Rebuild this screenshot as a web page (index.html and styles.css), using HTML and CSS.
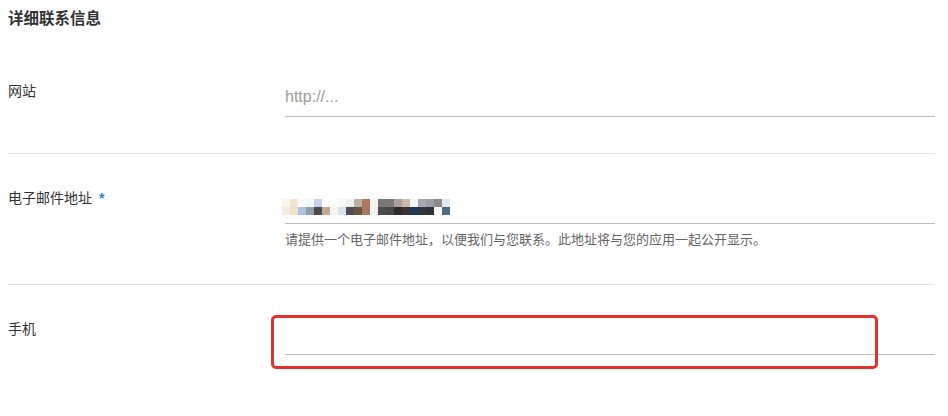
FILE: index.html
```html
<!DOCTYPE html>
<html lang="zh-CN">
<head>
  <meta charset="UTF-8">
  <meta name="viewport" content="width=device-width, initial-scale=1.0">
  <title>详细联系信息</title>
  <link rel="stylesheet" href="styles.css">
</head>
<body>
  <div class="panel">
    <h3 class="panel-title">详细联系信息</h3>

    <div class="form-row">
      <label class="form-label" for="website">网站</label>
      <div class="form-field">
        <input type="text" id="website" class="text-input" placeholder="http://...">
      </div>
    </div>

    <div class="form-row">
      <label class="form-label">电子邮件地址<span class="required">*</span></label>
      <div class="form-field">
        <div class="text-input masked-input">
          <!-- 打码后的邮箱地址 -->
          <svg width="168" height="16" viewBox="0 0 168 16">
            <rect x="0" y="0" width="8" height="8" fill="#f8f4ee"/>
            <rect x="8" y="0" width="8" height="8" fill="#f2e6d0"/>
            <rect x="16" y="0" width="8" height="8" fill="#fafafa"/>
            <rect x="24" y="0" width="8" height="8" fill="#f5f6f8"/>
            <rect x="32" y="0" width="8" height="8" fill="#c9cfe6"/>
            <rect x="40" y="0" width="8" height="8" fill="#fbfbfb"/>
            <rect x="48" y="0" width="8" height="8" fill="#fdfdfd"/>
            <rect x="56" y="0" width="8" height="8" fill="#f7f8f8"/>
            <rect x="64" y="0" width="8" height="8" fill="#efefef"/>
            <rect x="72" y="0" width="8" height="8" fill="#bcb0a2"/>
            <rect x="80" y="0" width="8" height="8" fill="#b07860"/>
            <rect x="88" y="0" width="8" height="8" fill="#f6f4f0"/>
            <rect x="96" y="0" width="8" height="8" fill="#777777"/>
            <rect x="104" y="0" width="8" height="8" fill="#7a7878"/>
            <rect x="112" y="0" width="8" height="8" fill="#a8a09c"/>
            <rect x="120" y="0" width="8" height="8" fill="#cbb8a6"/>
            <rect x="128" y="0" width="8" height="8" fill="#f6f6f8"/>
            <rect x="136" y="0" width="8" height="8" fill="#a6a8b8"/>
            <rect x="144" y="0" width="8" height="8" fill="#9a9ca8"/>
            <rect x="152" y="0" width="8" height="8" fill="#8a8a8a"/>
            <rect x="160" y="0" width="8" height="8" fill="#e2e8ee"/>
            <rect x="0" y="8" width="8" height="8" fill="#f3ece0"/>
            <rect x="8" y="8" width="8" height="8" fill="#eee2ca"/>
            <rect x="16" y="8" width="8" height="8" fill="#a9c3e0"/>
            <rect x="24" y="8" width="8" height="8" fill="#8f9fa8"/>
            <rect x="32" y="8" width="8" height="8" fill="#4a4a4a"/>
            <rect x="40" y="8" width="8" height="8" fill="#c2a892"/>
            <rect x="48" y="8" width="8" height="8" fill="#f3f6f2"/>
            <rect x="56" y="8" width="8" height="8" fill="#d8e2ee"/>
            <rect x="64" y="8" width="8" height="8" fill="#4e4e52"/>
            <rect x="72" y="8" width="8" height="8" fill="#6a5640"/>
            <rect x="80" y="8" width="8" height="8" fill="#a87860"/>
            <rect x="88" y="8" width="8" height="8" fill="#f2f2ec"/>
            <rect x="96" y="8" width="8" height="8" fill="#4c4c4c"/>
            <rect x="104" y="8" width="8" height="8" fill="#484848"/>
            <rect x="112" y="8" width="8" height="8" fill="#2e2a2c"/>
            <rect x="120" y="8" width="8" height="8" fill="#3c3034"/>
            <rect x="128" y="8" width="8" height="8" fill="#1f3a58"/>
            <rect x="136" y="8" width="8" height="8" fill="#303640"/>
            <rect x="144" y="8" width="8" height="8" fill="#2e3138"/>
            <rect x="152" y="8" width="8" height="8" fill="#fafafa"/>
            <rect x="160" y="8" width="8" height="8" fill="#4e6a80"/>
          </svg>
        </div>
        <p class="form-help">请提供一个电子邮件地址，以便我们与您联系。此地址将与您的应用一起公开显示。</p>
      </div>
    </div>

    <div class="form-row form-row-last">
      <label class="form-label" for="phone">手机</label>
      <div class="form-field">
        <input type="text" id="phone" class="text-input">
      </div>
    </div>

    <!-- 标注框 -->
    <div class="annotation"></div>
  </div>
</body>
</html>
```

FILE: styles.css
```css
body {
  margin: 8px;
  font-family: "Liberation Sans", "Noto Sans CJK SC", sans-serif;
  color: #333;
  background: #fff;
}
.panel {
  position: relative;
  width: 927px;
}
.panel-title {
  font-size: 15.5px;
  font-weight: 600;
  line-height: 22px;
  margin: 0 0 17px 0;
  color: #333;
}
.form-row {
  display: flex;
  padding: 30px 0 36px 0;
  border-bottom: 1px solid #e4e4e4;
}
.form-row-last {
  border-bottom: none;
}
.form-label {
  width: 277px;
  flex-shrink: 0;
  font-size: 14px;
  line-height: 29px;
  color: #333;
}
.required {
  color: #1f86c6;
  margin-left: 7px;
  font-weight: bold;
}
.form-field {
  flex: 1;
}
.text-input {
  display: block;
  width: 100%;
  height: 40px;
  box-sizing: border-box;
  border: none;
  border-bottom: 1px solid #bdbdbd;
  padding: 0;
  margin: 0;
  font-family: "Liberation Sans", sans-serif;
  font-size: 16px;
  color: #333;
  background: transparent;
  outline: none;
}
.text-input::placeholder {
  color: #9e9e9e;
}
.masked-input {
  padding-top: 15px;
}
.masked-input svg {
  display: block;
  margin-left: -3px;
}
.form-help {
  margin: 8px 0 0 0;
  font-size: 13px;
  line-height: 16px;
  color: #666;
}
.annotation {
  position: absolute;
  left: 263px;
  top: 307px;
  width: 607px;
  height: 54px;
  box-sizing: border-box;
  border: 3px solid #e5312c;
  border-radius: 5px;
}
```
